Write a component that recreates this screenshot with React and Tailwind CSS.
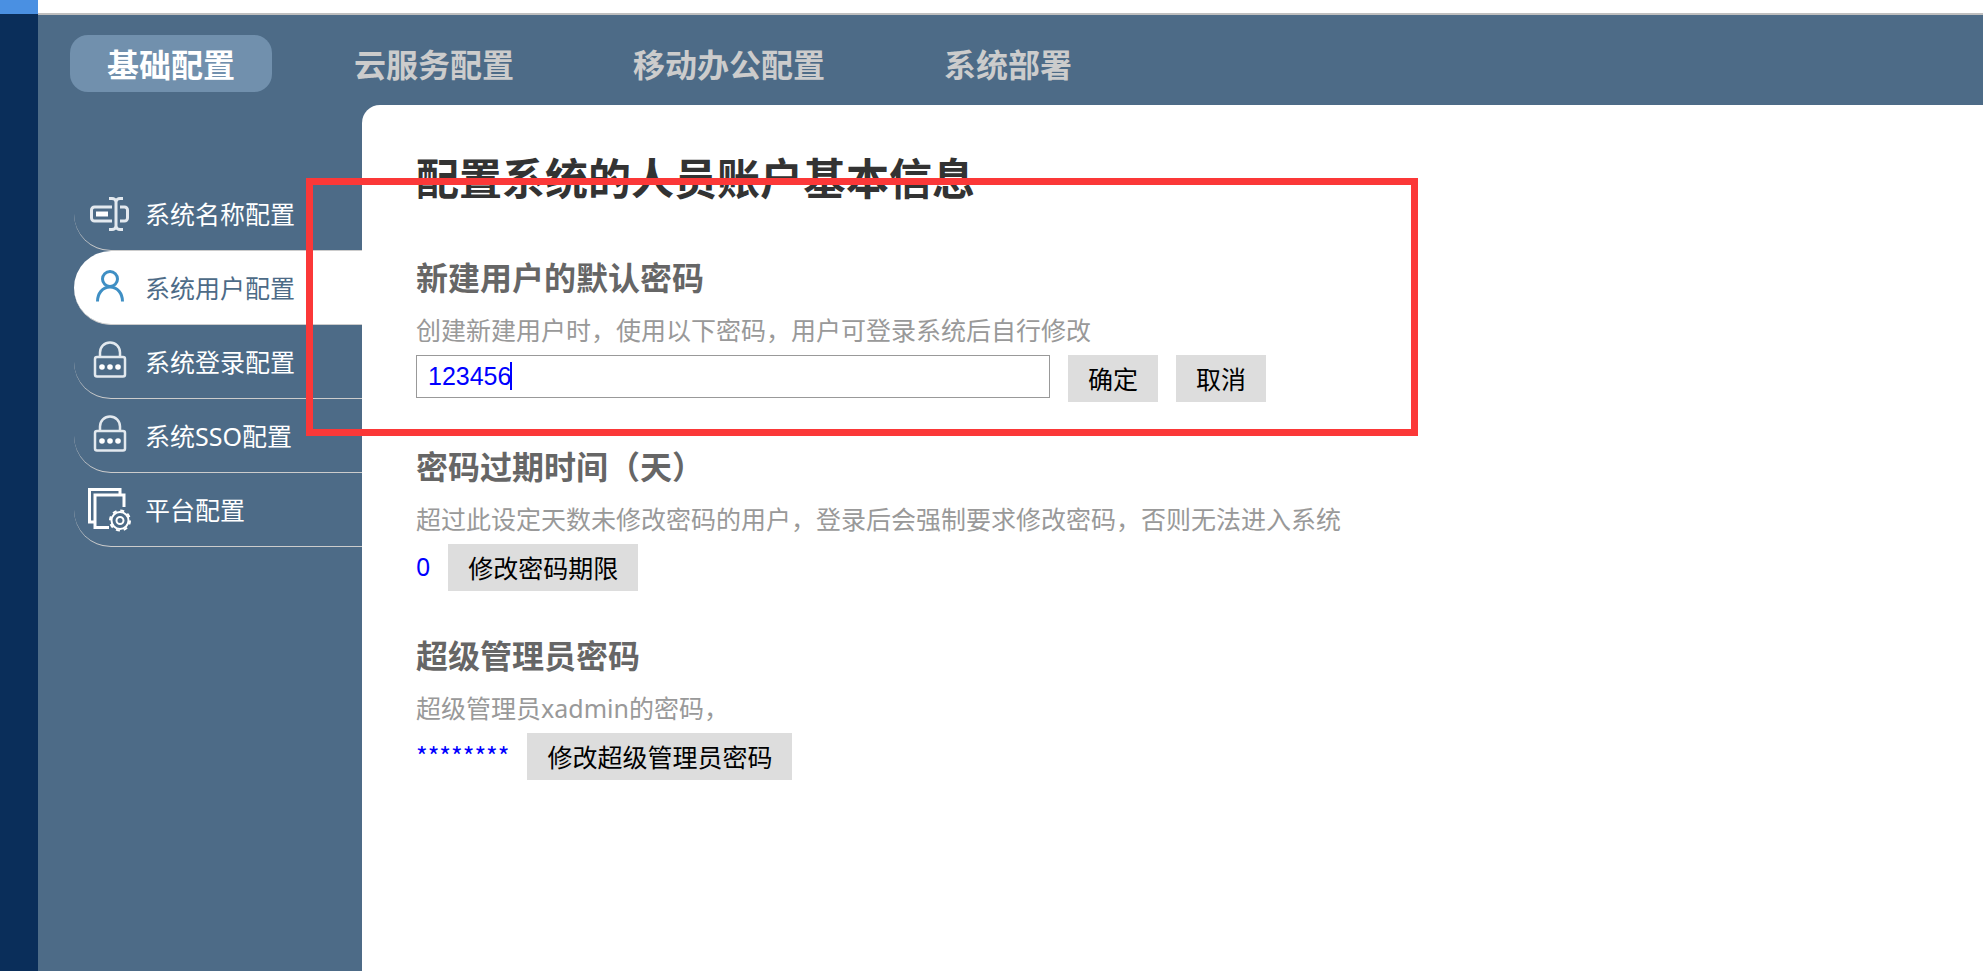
import { useState } from "react";

const tabs = ["基础配置", "云服务配置", "移动办公配置", "系统部署"];

function NameIcon() {
    return (
        <svg viewBox="0 0 44 44" className="size-11" fill="none" stroke="#e3e9ef" strokeWidth="3" aria-hidden="true">
            <path d="M24 15H6.500a3 3 0 0 0-3 3v8a3 3 0 0 0 3 3H24" />
            <path d="M32 15h4.500a3 3 0 0 1 3 3v8a3 3 0 0 1-3 3H32" />
            <path d="M8 22h12" stroke="#ffffff" strokeWidth="5" />
            <path d="M21 6.500h3c2 0 4 1.500 4 3.500v24c0 2-2 3.500-4 3.500h-3M35 6.500h-3c-2 0-4 1.500-4 3.500M28 34c0 2 2 3.500 4 3.500h3" />
        </svg>
    );
}

function UserIcon() {
    return (
        <svg viewBox="0 0 44 44" className="size-11" fill="none" stroke="#3f8fc4" strokeWidth="3" aria-hidden="true">
            <circle cx="22" cy="13" r="7.500" />
            <path d="M9.500 35.500c0-8 5-14.500 12.500-14.500s12.500 6.500 12.500 14.500" />
        </svg>
    );
}

function LockIcon() {
    return (
        <svg viewBox="0 0 44 44" className="size-11" fill="none" stroke="#e3e9ef" strokeWidth="2.500" aria-hidden="true">
            <rect x="7" y="17" width="30" height="19.500" rx="2" />
            <path d="M12 17v-4.500a9.800 9.800 0 0 1 20 0V17" />
            <g fill="#ffffff" stroke="none">
                <circle cx="14" cy="27" r="2.800" />
                <circle cx="22" cy="27" r="2.800" />
                <circle cx="30" cy="27" r="2.800" />
            </g>
        </svg>
    );
}

function PlatformIcon() {
    return (
        <svg viewBox="0 0 44 44" className="size-11" fill="none" stroke="#ffffff" strokeWidth="3" aria-hidden="true">
            <path d="M6 34H1.500V1.500H32V6" />
            <path d="M21 39.500H7V7h29v12" />
            <circle cx="32" cy="32.500" r="8.500" strokeWidth="2" />
            <circle cx="32" cy="32.500" r="10" strokeWidth="2" strokeDasharray="4 3.850" />
            <circle cx="32" cy="32.500" r="3.500" strokeWidth="2" />
        </svg>
    );
}

const menu = [
    { label: "系统名称配置", Icon: NameIcon },
    { label: "系统用户配置", Icon: UserIcon },
    { label: "系统登录配置", Icon: LockIcon },
    { label: "系统SSO配置", Icon: LockIcon },
    { label: "平台配置", Icon: PlatformIcon },
];

function GrayButton({ children }) {
    return (
        <button type="button" className="h-[47px] shrink-0 bg-[#dddddd] px-5 text-[25px] leading-8 text-black hover:bg-[#cccccc]">
            {children}
        </button>
    );
}

function Section({ title, desc, children }) {
    return (
        <section className="h-[189px]">
            <h2 className="text-[32px] leading-12 font-bold text-[#666666]">{title}</h2>
            <p className="mt-2 text-[25px] leading-10 text-[#999999]">{desc}</p>
            <div className="mt-[5px] flex items-start gap-[18px] text-[25px] text-[#0000ff]">{children}</div>
        </section>
    );
}

export default function App() {
    const [activeTab, setActiveTab] = useState("基础配置");
    const [activeMenu, setActiveMenu] = useState("系统用户配置");
    const [password, setPassword] = useState("123456");

    return (
        <div className="flex min-h-screen bg-[#4d6b87] font-['Noto_Sans','Noto_Sans_CJK_SC',sans-serif]">
            <div className="w-[38px] shrink-0 border-t-14 border-[#4a90e2] bg-[#0a2e5a]" />

            <div className="flex min-w-0 flex-1 flex-col">
                <div className="h-[15px] border-b-2 border-[#bfbfbf] bg-white" />

                <nav className="flex gap-[45px] px-8 pt-5 pb-[13px]">
                    {tabs.map((tab) => (
                        <button
                            key={tab}
                            type="button"
                            onClick={() => setActiveTab(tab)}
                            className={`h-[57px] rounded-[18px] px-[37px] pt-0.5 text-[32px] leading-12 font-bold whitespace-nowrap ${
                                tab === activeTab ? "bg-[#7190ad] text-white" : "text-[#cccccc]"
                            }`}
                        >
                            {tab}
                        </button>
                    ))}
                </nav>

                <div className="flex flex-1">
                    <aside className="w-[324px] shrink-0 pt-18 pl-9">
                        {menu.map(({ label, Icon }) => (
                            <button
                                key={label}
                                type="button"
                                onClick={() => setActiveMenu(label)}
                                className={`flex h-[74px] w-full items-center gap-[13px] rounded-l-[37px] border-b border-[#cccccc] pl-[14px] text-[25px] leading-8 whitespace-nowrap ${
                                    label === activeMenu ? "bg-white text-[#4d6b87]" : "text-white"
                                }`}
                            >
                                <Icon />
                                <span>{label}</span>
                            </button>
                        ))}
                    </aside>

                    <main className="relative min-w-0 flex-1 rounded-tl-[18px] bg-white pl-[54px]">
                        <h1 className="pt-[42px] text-[43px] leading-16 font-bold text-[#333333]">配置系统的人员账户基本信息</h1>

                        <div className="pt-[43px]">
                            <Section title="新建用户的默认密码" desc="创建新建用户时，使用以下密码，用户可登录系统后自行修改">
                                <div className="relative">
                                    <input
                                        type="text"
                                        aria-label="新建用户的默认密码"
                                        value={password}
                                        onChange={(e) => setPassword(e.target.value)}
                                        className="h-[43px] w-[634px] border border-[#999999] px-[11px] font-['Liberation_Sans',sans-serif] leading-8 outline-none"
                                    />
                                    <span className="absolute top-[7px] left-[94px] h-7 w-0.5 bg-[#0000ff]" />
                                </div>
                                <GrayButton>确定</GrayButton>
                                <GrayButton>取消</GrayButton>
                            </Section>

                            <Section title="密码过期时间（天）" desc="超过此设定天数未修改密码的用户，登录后会强制要求修改密码，否则无法进入系统">
                                <span className="leading-11">0</span>
                                <GrayButton>修改密码期限</GrayButton>
                            </Section>

                            <Section title="超级管理员密码" desc="超级管理员xadmin的密码，">
                                <span className="font-['Noto_Sans_CJK_SC',sans-serif] leading-11">********</span>
                                <GrayButton>修改超级管理员密码</GrayButton>
                            </Section>
                        </div>

                        {/* highlight frame around the default password block */}
                        <div className="pointer-events-none absolute top-[73px] -left-14 h-[258px] w-[1112px] border-7 border-[#fb3838]" />
                    </main>
                </div>
            </div>
        </div>
    );
}
